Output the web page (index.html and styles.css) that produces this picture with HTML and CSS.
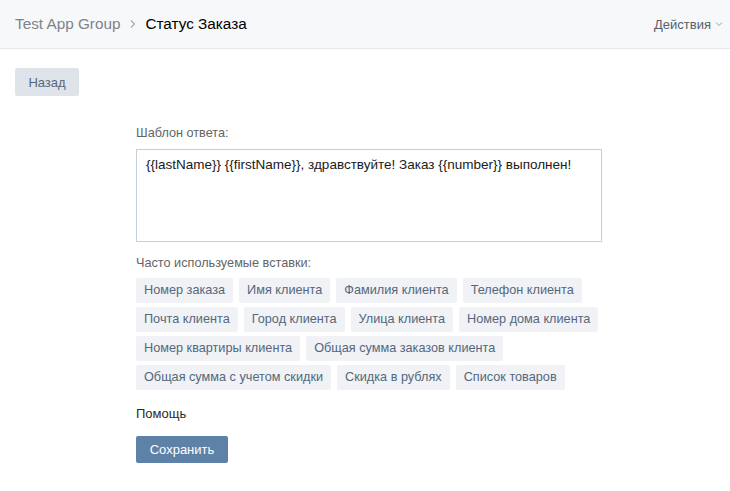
FILE: index.html
```html
<!DOCTYPE html>
<html lang="ru">
<head>
<meta charset="utf-8">
<link rel="stylesheet" href="styles.css">
</head>
<body>
<header class="topbar">
  <nav class="crumbs">
    <span class="crumb-parent">Test App Group</span>
    <svg class="crumb-sep" width="8" height="10" viewBox="0 0 8 10"><path d="M2 1.5 L5.5 5 L2 8.5" fill="none" stroke="#a0a8b3" stroke-width="1.1"/></svg>
    <span class="crumb-current">Статус Заказа</span>
  </nav>
  <div class="actions">
    <span>Действия</span>
    <svg width="8" height="6" viewBox="0 0 8 6"><path d="M1 1.5 L4 4.5 L7 1.5" fill="none" stroke="#99a2ad" stroke-width="1"/></svg>
  </div>
</header>
<main class="page">
  <div class="back-row"><button class="btn btn-secondary">Назад</button></div>
  <section class="form">
    <div class="label">Шаблон ответа:</div>
    <div class="textarea">{{lastName}} {{firstName}}, здравствуйте! Заказ {{number}} выполнен!</div>
    <div class="label label-inserts">Часто используемые вставки:</div>
    <div class="chips">
      <div class="chip-row">
        <span class="chip">Номер заказа</span>
        <span class="chip">Имя клиента</span>
        <span class="chip">Фамилия клиента</span>
        <span class="chip">Телефон клиента</span>
      </div>
      <div class="chip-row">
        <span class="chip">Почта клиента</span>
        <span class="chip">Город клиента</span>
        <span class="chip">Улица клиента</span>
        <span class="chip">Номер дома клиента</span>
      </div>
      <div class="chip-row">
        <span class="chip">Номер квартиры клиента</span>
        <span class="chip">Общая сумма заказов клиента</span>
      </div>
      <div class="chip-row">
        <span class="chip">Общая сумма с учетом скидки</span>
        <span class="chip">Скидка в рублях</span>
        <span class="chip">Список товаров</span>
      </div>
    </div>
    <div class="help">Помощь</div>
    <div class="save-row"><button class="btn btn-primary">Сохранить</button></div>
  </section>
</main>
</body>
</html>
```
FILE: styles.css
```css
* { box-sizing: border-box; }
html, body { margin: 0; padding: 0; background: #fff; }
body {
  font-family: "Liberation Sans", Arial, sans-serif;
  color: #000;
  width: 730px;
  height: 491px;
  overflow: hidden;
}
.topbar {
  height: 49px;
  background: #f7f8fa;
  border-bottom: 1px solid #e7e8ec;
  display: flex;
  align-items: center;
  justify-content: space-between;
  padding: 0 7px 0 15px;
}
.crumbs { display: flex; align-items: center; font-size: 15.3px; }
.crumb-parent { color: #7f8387; }
.crumb-sep { margin: 0 8px 0 9px; }
.crumb-current { color: #000; }
.actions {
  display: flex;
  align-items: center;
  gap: 4px;
  font-size: 13px;
  color: #55606c;
}
.page { padding: 19px 15px 0; }
.btn {
  font-family: inherit;
  font-size: 13px;
  border: none;
  border-radius: 2px;
  height: 28px;
  padding: 0;
  cursor: pointer;
}
.btn-secondary { background: #dfe4ea; color: #55677d; width: 64px; }
.btn-primary { background: #5e81a8; color: #fff; width: 92px; height: 27px; }
.form { padding-left: 121px; padding-top: 29px; }
.label { font-size: 12.7px; color: #656565; line-height: 16px; }
.textarea {
  margin-top: 8px;
  width: 466px;
  height: 93px;
  border: 1px solid #c5d0db;
  padding: 6px 9px;
  font-size: 13.5px;
  line-height: 17px;
  color: #1a1a1a;
}
.label-inserts { margin-top: 13px; }
.chips { margin-top: 7px; display: flex; flex-direction: column; gap: 4px; }
.chip-row { display: flex; gap: 6px; }
.chip {
  background: #f0f2f5;
  color: #55677d;
  font-size: 12.7px;
  height: 25px;
  line-height: 25px;
  padding: 0 8px;
  border-radius: 2px;
}
.help { margin-top: 16px; font-size: 13px; color: #2a2a2a; line-height: 16px; }
.save-row { margin-top: 14px; }
```
